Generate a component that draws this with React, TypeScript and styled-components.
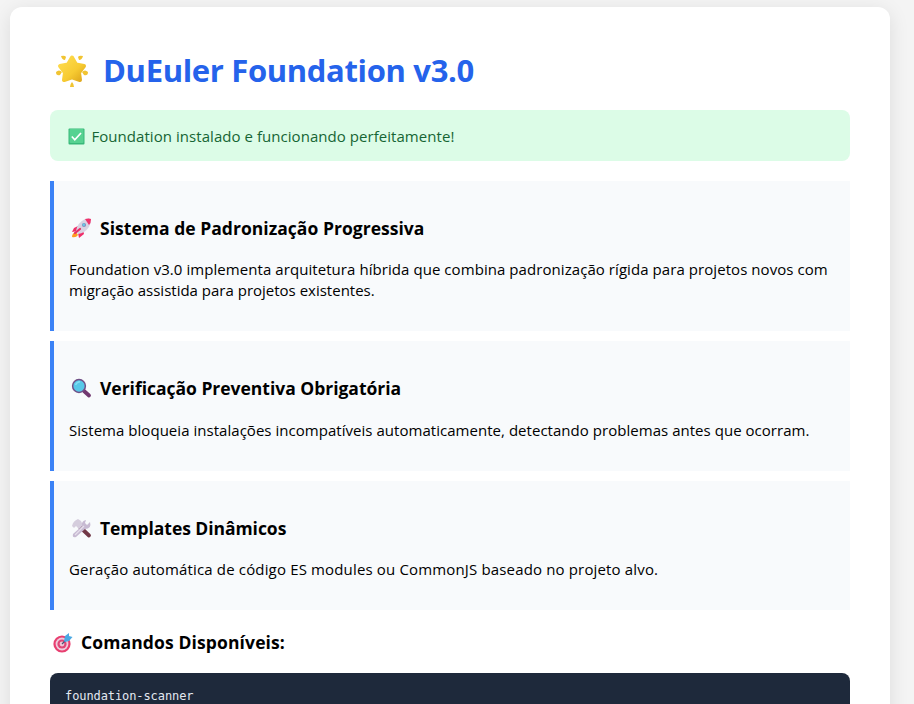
import React from "react";
import styled, { createGlobalStyle } from "styled-components";

const GlobalStyle = createGlobalStyle`
  *, *::before, *::after { box-sizing: border-box; }
  html, body { margin: 0; height: 704px; overflow: hidden; background: #f4f4f4; }
  h1, h3, p { margin: 0; }
`;

const Page = styled.div`
  height: 704px;
  overflow: hidden;
  padding: 7px 24px 0 10px;
  background: #f4f4f4;
  color: #000;
  font-family: "Segoe UI", "Open Sans", "Noto Sans", sans-serif;
`;

const Container = styled.main`
  width: 880px;
  height: 900px;
  padding: 40px;
  border-radius: 12px;
  background: #fff;
  box-shadow: 0 4px 20px rgba(0, 0, 0, 0.1);
`;

const Title = styled.h1`
  display: flex;
  align-items: center;
  height: 43px;
  margin-bottom: 20px;
  padding: 4px 0 0 5px;
  gap: 14px;
  color: #2563eb;
  font-size: 31px;
  line-height: 43px;
  font-weight: 700;
`;

const Label = styled.span<{ $spacing?: number }>`
  white-space: nowrap;
  letter-spacing: ${({ $spacing = 0 }) => $spacing}px;
`;

const Icon = styled.svg<{ $size: number }>`
  display: block;
  flex: none;
  width: ${({ $size }) => $size}px;
  height: ${({ $size }) => $size}px;
`;

const Status = styled.div`
  display: flex;
  align-items: center;
  gap: 7px;
  height: 51px;
  margin-bottom: 20px;
  padding: 1px 15px 0 17.5px;
  border-radius: 8px;
  background: #dcfce7;
  color: #166534;
  font-size: 15px;
`;

const Feature = styled.section<{ $height: number }>`
  height: ${({ $height }) => $height}px;
  margin-bottom: 10px;
  padding: 35px 15px 0;
  border-left: 4px solid #3b82f6;
  background: #f8fafc;
`;

const Heading = styled.h3`
  display: flex;
  align-items: center;
  gap: 8px;
  height: 25px;
  padding-left: 2px;
  font-size: 17.5px;
  line-height: 25px;
  font-weight: 700;
`;

const Description = styled.p<{ $gap?: number }>`
  display: flex;
  flex-direction: column;
  margin-top: ${({ $gap = 18 }) => $gap}px;
  font-size: 15px;
  line-height: 21px;
`;

const CommandsHeading = styled(Heading)`
  margin-top: 20px;
  padding-left: 3px;
`;

const CodeBlock = styled.pre`
  height: 180px;
  margin: 18px 0 0;
  padding: 15px;
  border-radius: 8px;
  background: #1e293b;
  color: #e2e8f0;
  font-family: "DejaVu Sans Mono", monospace;
  font-size: 12px;
  line-height: 16px;
  letter-spacing: -0.09px;
`;

const StarIcon = () => (
  <Icon $size={34} viewBox="0 0 34 34">
    <defs>
      <linearGradient id="gold" x1="0" y1="0" x2="1" y2="1">
        <stop offset="0" stopColor="#ffdd50" />
        <stop offset=".6" stopColor="#f7cb32" />
        <stop offset="1" stopColor="#dda51b" />
      </linearGradient>
    </defs>
    <path d="M17 3.5 L21 10.5 L29 12 L24 18.5 L25 26 L17 23.3 L9 26 L10 18.5 L5 12 L13 10.5 Z" fill="url(#gold)" stroke="url(#gold)" strokeWidth="4" strokeLinejoin="round" />
    <g fill="#f1c432">
      <path d="M6 2 Q10 1 11 3 L10 6 Q7 6 6 2Z" />
      <path d="M28 2 Q24 1 23 3 L24 6 Q27 6 28 2Z" />
      <path d="M1 18 Q4 15 7 18 L5 21 Q1 22 1 18Z" />
      <path d="M33 18 Q30 15 27 18 L29 21 Q33 22 33 18Z" />
      <path d="M17 28 Q19 30 19 33 H15 Q15 30 17 28Z" />
    </g>
  </Icon>
);

const CheckIcon = () => (
  <Icon $size={17} viewBox="0 0 17 17">
    <rect x=".5" y=".5" width="16" height="16" rx="1" fill="#37b879" />
    <rect x="1.5" y="1" width="14" height="14" rx="1" fill="#57d291" />
    <path d="M3.8 8.5 L6.8 11.8 L13 5" fill="none" stroke="#fff" strokeWidth="1.7" />
  </Icon>
);

const RocketIcon = () => (
  <Icon $size={21} viewBox="0 0 21 21">
    <path d="M1 19 Q1 15 5 14 L7 17 Q5 20 1 19Z" fill="#ff9b22" />
    <path d="M7 8 L3 10 L1 14 L7 13Z M12 12 L13 16 L8 20 L7 15Z" fill="#ef2d69" />
    <path d="M5 13 Q6 5 14 1 Q18 0 20 1 Q20 5 18 9 Q14 15 7 16Z" fill="#d9d3e2" />
    <path d="M14 1 Q18 0 20 1 Q20 5 18 7Z" fill="#f1316c" />
    <circle cx="13" cy="7" r="2.1" fill="#8490bd" />
    <circle cx="12.8" cy="6.8" r="1.2" fill="#65cde9" />
    <path d="M4 15 L9 11" stroke="#e42d66" strokeWidth="2.2" strokeLinecap="round" />
  </Icon>
);

const SearchIcon = () => (
  <Icon $size={21} viewBox="0 0 21 21">
    <path d="M13 13 L18 17.5" stroke="#713870" strokeWidth="3.8" strokeLinecap="round" />
    <circle cx="8" cy="8" r="6.4" fill="#57c8e8" stroke="#704f86" strokeWidth="1.5" />
    <path d="M4.5 7 Q6 4 9 3.8" stroke="#82dff2" strokeWidth="1.5" fill="none" />
  </Icon>
);

const ToolsIcon = () => (
  <Icon $size={21} viewBox="0 0 21 21">
    <path d="M9 9 L18 17.5" stroke="#713746" strokeWidth="3.8" strokeLinecap="round" />
    <path d="M1 8 Q2 3 7 1 L10 3 L12 7 L8 11 L5 8 L3 10Z" fill="#d5cddd" />
    <path d="M2 16 L11 8 Q10 3 15 2 L14 5 L16 7 L19 4 Q21 11 14 11 L5 19Q1 20 2 16Z" fill="#c7bad2" />
    <path d="M4 17 L13 8" stroke="#e6dfeb" strokeWidth="1.3" />
  </Icon>
);

const TargetIcon = () => (
  <Icon $size={20} viewBox="0 0 20 20">
    <circle cx="9" cy="11" r="8.6" fill="#e83f70" />
    <circle cx="9" cy="11" r="6.4" fill="#efcbdc" />
    <circle cx="9" cy="11" r="4.6" fill="#df4777" />
    <circle cx="9" cy="11" r="2.4" fill="#efc5d4" />
    <path d="M9 11 L15 5" stroke="#465577" strokeWidth="1.2" />
    <path d="M11 8 L12 3 L16 0 L16 3 L19.5 4 L16 8 L12 9Z" fill="#4ba9e4" />
  </Icon>
);

export default function App() {
  return (
    <>
      <GlobalStyle />
      <Page>
        <Container>
          <Title><StarIcon /><Label $spacing={-0.34}>DuEuler Foundation v3.0</Label></Title>
          <Status><CheckIcon /><Label $spacing={0.05}>Foundation instalado e funcionando perfeitamente!</Label></Status>
          <Feature $height={150}>
            <Heading><RocketIcon /><Label $spacing={0.03}>Sistema de Padronização Progressiva</Label></Heading>
            <Description>
              <Label $spacing={0.065}>Foundation v3.0 implementa arquitetura híbrida que combina padronização rígida para projetos novos com </Label>
              <Label>migração assistida para projetos existentes.</Label>
            </Description>
          </Feature>
          <Feature $height={130}>
            <Heading><SearchIcon /><Label $spacing={-0.02}>Verificação Preventiva Obrigatória</Label></Heading>
            <Description $gap={19}><Label $spacing={0.035}>Sistema bloqueia instalações incompatíveis automaticamente, detectando problemas antes que ocorram.</Label></Description>
          </Feature>
          <Feature $height={129}>
            <Heading><ToolsIcon /><Label $spacing={-0.05}>Templates Dinâmicos</Label></Heading>
            <Description><Label $spacing={0.155}>Geração automática de código ES modules ou CommonJS baseado no projeto alvo.</Label></Description>
          </Feature>
          <CommandsHeading><TargetIcon /><Label $spacing={0.12}>Comandos Disponíveis:</Label></CommandsHeading>
          <CodeBlock>foundation-scanner</CodeBlock>
        </Container>
      </Page>
    </>
  );
}
